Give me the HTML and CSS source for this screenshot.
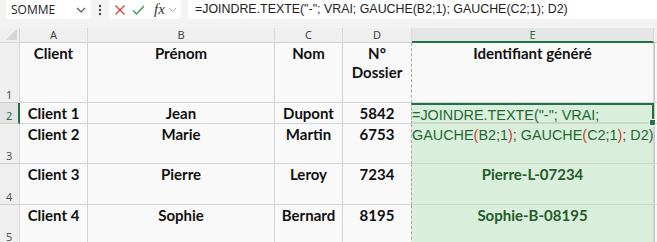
FILE: index.html
```html
<!DOCTYPE html>
<html lang="fr">
<head>
<meta charset="utf-8">
<link rel="stylesheet" href="styles.css">
</head>
<body>
<div class="toolbar">
  <div class="namebox">
    <span class="name">SOMME</span>
    <svg class="chev" width="10" height="6" viewBox="0 0 10 6"><path d="M1 1 L5 5 L9 1" fill="none" stroke="#555" stroke-width="1.2"/></svg>
  </div>
  <svg class="dots" width="4" height="12" viewBox="0 0 4 12"><circle cx="2" cy="2" r="1.2" fill="#444"/><circle cx="2" cy="6" r="1.2" fill="#444"/><circle cx="2" cy="10" r="1.2" fill="#444"/></svg>
  <div class="fxbox">
    <svg width="12" height="12" viewBox="0 0 12 12"><path d="M1.5 1.5 L10.5 10.5 M10.5 1.5 L1.5 10.5" stroke="#d83b3b" stroke-width="1.2" fill="none"/></svg>
    <svg width="13" height="12" viewBox="0 0 13 12"><path d="M1 6.5 L4.5 10 L12 2" stroke="#3a9a4e" stroke-width="1.3" fill="none"/></svg>
    <span class="fx">fx</span>
    <svg width="9" height="6" viewBox="0 0 9 6"><path d="M1 1 L4.5 4.5 L8 1" fill="none" stroke="#aaa" stroke-width="1"/></svg>
  </div>
  <div class="formula">=JOINDRE.TEXTE("-"; VRAI; GAUCHE(B2;1); GAUCHE(C2;1); D2)</div>
</div>
<div class="sheet">
  <div class="corner"><svg width="11" height="11" viewBox="0 0 11 11"><path d="M11 0 L11 11 L0 11 Z" fill="#d6d6d6"/></svg></div>
  <div class="colh">A</div>
  <div class="colh">B</div>
  <div class="colh">C</div>
  <div class="colh">D</div>
  <div class="colh sel">E</div>
  <div class="colh rest"></div>

  <div class="rowh">1</div>
  <div class="c">Client</div>
  <div class="c">Prénom</div>
  <div class="c">Nom</div>
  <div class="c">N°<br>Dossier</div>
  <div class="c e">Identifiant généré</div>
  <div class="c rest"></div>

  <div class="rowh selr">2</div>
  <div class="c">Client 1</div>
  <div class="c">Jean</div>
  <div class="c">Dupont</div>
  <div class="c">5842</div>
  <div class="c e g active"><div class="ftext">=JOINDRE.TEXTE("-"; VRAI;<br>GAUCHE<span class="p">(</span>B2;1<span class="p">)</span>; GAUCHE<span class="p">(</span>C2;1<span class="p">)</span>; D2)</div><span class="handle"></span></div>
  <div class="c rest"></div>

  <div class="rowh">3</div>
  <div class="c">Client 2</div>
  <div class="c">Marie</div>
  <div class="c">Martin</div>
  <div class="c">6753</div>
  <div class="c e g"></div>
  <div class="c rest"></div>

  <div class="rowh">4</div>
  <div class="c">Client 3</div>
  <div class="c">Pierre</div>
  <div class="c">Leroy</div>
  <div class="c">7234</div>
  <div class="c e g res">Pierre-L-07234</div>
  <div class="c rest"></div>

  <div class="rowh">5</div>
  <div class="c">Client 4</div>
  <div class="c">Sophie</div>
  <div class="c">Bernard</div>
  <div class="c">8195</div>
  <div class="c e g res">Sophie-B-08195</div>
  <div class="c rest"></div>
</div>
</body>
</html>
```
FILE: styles.css
```css
html, body {
  margin: 0;
  padding: 0;
  background: #f3f3f3;
  overflow: hidden;
}
body {
  width: 657px;
  height: 242px;
  font-family: "Noto Sans", sans-serif;
}
.toolbar {
  height: 19px;
  display: flex;
  align-items: stretch;
  padding-left: 6px;
  margin-bottom: 9px;
}
.namebox {
  width: 85px;
  background: #fff;
  border-radius: 0 0 4px 4px;
  display: flex;
  align-items: center;
  justify-content: space-between;
  padding: 0 5px 0 5px;
  box-sizing: border-box;
}
.name {
  font-family: "Open Sans", sans-serif;
  font-size: 12px;
  color: #222;
}
.dots {
  align-self: center;
  margin: 0 7px 0 7px;
}
.fxbox {
  width: 72px;
  background: #fff;
  border-radius: 0 0 4px 4px;
  display: flex;
  align-items: center;
  gap: 6px;
  padding-left: 5px;
  box-sizing: border-box;
}
.fx {
  font-family: "Liberation Serif", serif;
  font-style: italic;
  font-size: 15px;
  color: #333;
  margin-left: 3px;
  margin-right: -3px;
  line-height: 1;
}
.formula {
  flex: 1;
  margin-left: 7px;
  background: #fff;
  border-radius: 0 0 0 4px;
  font-family: "Liberation Sans", sans-serif;
  font-size: 12.4px;
  color: #222;
  line-height: 19px;
  padding-left: 7px;
}
.sheet {
  display: grid;
  grid-template-columns: 20px 68px 187px 68px 69px 242px 1fr;
  grid-template-rows: 15px 60px 21px 40px 41px 40px;
  font-family: "Lato", sans-serif;
  font-weight: 700;
  font-size: 15px;
}
.corner {
  background: #efefef;
  border-right: 1px solid #d6d6d6;
  border-bottom: 1px solid #d6d6d6;
  box-sizing: border-box;
  display: flex;
  align-items: flex-end;
  justify-content: flex-end;
  padding: 0 2px 2px 0;
}
.colh {
  background: #efefef;
  border-right: 1px solid #d8d8d8;
  border-bottom: 1px solid #d0d0d0;
  box-sizing: border-box;
  font-family: "Noto Sans", sans-serif;
  font-weight: 400;
  font-size: 11px;
  color: #444;
  text-align: center;
  line-height: 14px;
}
.colh.sel {
  color: #217346;
  border-bottom: 2px solid #217346;
  background: #e6e6e6;
}
.colh.rest {
  border-right: none;
}
.rowh {
  background: #efefef;
  border-right: 1px solid #d8d8d8;
  border-bottom: 1px solid #d0d0d0;
  box-sizing: border-box;
  font-family: "Noto Sans", sans-serif;
  font-weight: 400;
  font-size: 11px;
  color: #555;
  display: flex;
  align-items: flex-end;
  padding-left: 6px;
  line-height: 14px;
}
.rowh.selr {
  color: #217346;
  border-right: 2px solid #217346;
  background: #e4e4e4;
}
.c {
  background: #f9f9fa;
  border-right: 1px solid #d4d4d4;
  border-bottom: 1px solid #d4d4d4;
  box-sizing: border-box;
  text-align: center;
  line-height: 19px;
  padding-top: 1px;
  color: #111;
}
.c.e {
  border-left: 1px dashed #a8a8a8;
  margin-left: -1px;
}
.c.g {
  background: #d9eedb;
  border-bottom-color: #c9d6cb;
}
.c.rest {
  background: #f9f9fa;
  border-right: none;
  border-left: 1px solid #c8c8c8;
}
.c.res {
  color: #245c2a;
}
.active {
  position: relative;
  border: 2px solid #217346;
  border-left-style: solid;
  overflow: visible;
  z-index: 2;
}
.ftext {
  position: absolute;
  left: 0;
  top: 0;
  width: 260px;
  text-align: left;
  font-family: "Liberation Sans", sans-serif;
  font-weight: 400;
  font-size: 14.4px;
  line-height: 20px;
  color: #1f6a30;
  white-space: nowrap;
}
.ftext .p {
  color: #d13a3a;
}
.handle {
  position: absolute;
  right: -4px;
  bottom: -4px;
  width: 5px;
  height: 5px;
  background: #217346;
  border: 1px solid #fff;
}
```
